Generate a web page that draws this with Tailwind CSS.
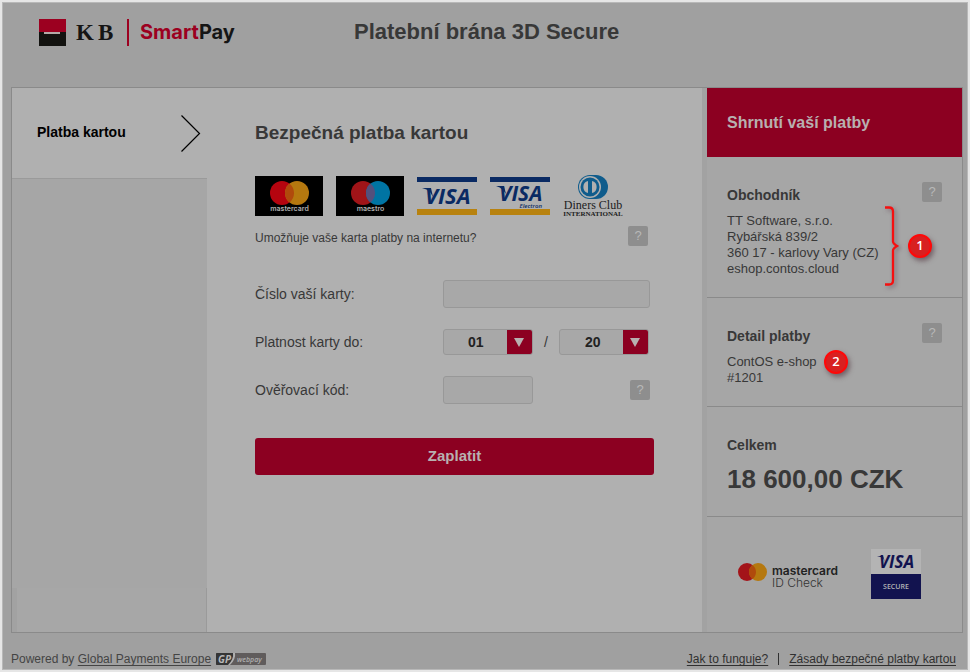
<!DOCTYPE html>
<html lang="cs">
<head>
    <meta charset="UTF-8">
    <meta name="viewport" content="width=device-width, initial-scale=1.0">
    <title>Platební brána 3D Secure</title>
    <script src="https://cdn.jsdelivr.net/npm/@tailwindcss/browser@4"></script>
</head>
<body class="bg-[#a0a0a0] font-['Liberation_Sans',Arial,sans-serif] text-[#383838]">
    <div class="flex min-h-screen flex-col border-2 border-[#e6e6e6]">
        <div class="flex flex-1 flex-col border border-[#b8b8b8] pr-1 pl-2">

            <header class="flex h-[84px] items-start">
                <svg class="mt-4 ml-[27px] h-7 w-[200px]" viewBox="0 0 200 28" role="img" aria-label="KB SmartPay">
                    <rect x="1" y="0" width="27" height="14" fill="#9c0020"/>
                    <rect x="1" y="13" width="27" height="14" fill="#12120f"/>
                    <rect x="6" y="13" width="16" height="2" fill="#b3a9a7"/>
                    <text x="38" y="21" font-family="Liberation Serif, serif" font-weight="bold" font-size="23" fill="#151515">K</text>
                    <text x="60" y="21" font-family="Liberation Serif, serif" font-weight="bold" font-size="23" fill="#151515">B</text>
                    <rect x="89" y="0" width="2" height="27" fill="#9c0020"/>
                    <text x="102" y="20" font-family="Inter" font-weight="bold" font-size="20" fill="#151515"><tspan fill="#9c0020">Smart</tspan>Pay</text>
                </svg>
                <h1 class="mt-[15px] ml-[116px] text-[22px] leading-7 font-bold">Platební brána 3D Secure</h1>
            </header>

            <div class="grid grid-cols-[195px_1fr_260px] border border-[#8a8a8a] bg-[#b0b0b0]">
                <nav class="flex flex-col bg-[#a6a6a6]">
                    <a href="#" class="flex h-[91px] items-center justify-between border-b border-[#9a9a9a] bg-[#b0b0b0] pr-[6px] pb-px pl-[25px] text-[14px] font-bold text-black">
                        Platba kartou
                        <svg class="h-10 w-5" viewBox="0 0 20 40" fill="none" stroke="#000" stroke-width="1.2"><path d="M0.500 2.500L18.500 20.500L0.500 38.500"/></svg>
                    </a>
                    <div class="mt-auto h-11 border-r border-l-[5px] border-r-[#9a9a9a] border-l-[#a2a2a2] bg-[#a7a7a7]"></div>
                </nav>

                <main class="px-12 pt-8">
                    <h2 class="text-[19px] leading-[26px] font-bold">Bezpečná platba kartou</h2>

                    <div class="mt-[30px] flex items-center gap-[13px]">
                        <svg class="h-10 w-[68px]" viewBox="0 0 68 40" role="img" aria-label="mastercard">
                            <rect width="68" height="40" fill="#000"/>
                            <circle cx="27" cy="17" r="12" fill="#b5040f"/>
                            <circle cx="42" cy="17" r="12" fill="#b5780f"/>
                            <path d="M34.500 7.600a12 12 0 0 1 0 18.800a12 12 0 0 1 0-18.800z" fill="#b04a0c"/>
                            <text x="34.500" y="35" text-anchor="middle" font-family="Inter" font-weight="600" font-size="7" fill="#b0b0b0">mastercard</text>
                        </svg>
                        <svg class="h-10 w-[68px]" viewBox="0 0 68 40" role="img" aria-label="maestro">
                            <rect width="68" height="40" fill="#000"/>
                            <circle cx="27" cy="17" r="12" fill="#a01418"/>
                            <circle cx="42" cy="17" r="12" fill="#0074a3"/>
                            <path d="M34.500 7.600a12 12 0 0 1 0 18.800a12 12 0 0 1 0-18.800z" fill="#54507c"/>
                            <text x="34.500" y="35" text-anchor="middle" font-family="Inter" font-weight="600" font-size="7" fill="#b0b0b0">maestro</text>
                        </svg>
                        <svg class="h-[38px] w-[60px]" viewBox="0 0 60 38" role="img" aria-label="VISA">
                            <rect width="60" height="5" fill="#0a2a63"/>
                            <rect y="32" width="60" height="6" fill="#b8820f"/>
                            <path d="M5 11h9l2 9-3-5q-3-3-8-4z" fill="#0a2a63"/>
                            <text x="8" y="27" font-family="Open Sans" font-weight="bold" font-style="italic" font-size="22" fill="#0a2a63">VISA</text>
                        </svg>
                        <svg class="h-[38px] w-[60px]" viewBox="0 0 60 38" role="img" aria-label="VISA Electron">
                            <rect width="60" height="5" fill="#0a2a63"/>
                            <rect y="32" width="60" height="6" fill="#b8820f"/>
                            <path d="M6 9h8l2 8-3-4q-3-3-7-4z" fill="#0a2a63"/>
                            <text x="9" y="24" font-family="Open Sans" font-weight="bold" font-style="italic" font-size="21" fill="#0a2a63">VISA</text>
                            <text x="52" y="31" text-anchor="end" font-family="Open Sans" font-weight="600" font-style="italic" font-size="6" fill="#0a2a63">Electron</text>
                        </svg>
                        <svg class="-my-px h-[42px] w-[60px]" viewBox="0 0 60 42" role="img" aria-label="Diners Club International">
                            <path d="M27 0h6a12 12 0 0 1 0 24h-6a12 12 0 0 1 0-24z" fill="#0f5c8c"/>
                            <circle cx="27" cy="12" r="11" fill="#b0b0b0"/>
                            <circle cx="27" cy="12" r="9.500" fill="#0f5c8c"/>
                            <path d="M25 6v12a6.200 6.200 0 0 1 0-12zM29 6v12a6.200 6.200 0 0 0 0-12z" fill="#b0b0b0"/>
                            <text x="30" y="34" text-anchor="middle" font-family="Liberation Serif" font-size="12" fill="#1c1c1c">Diners Club</text>
                            <text x="30" y="41" text-anchor="middle" font-family="Liberation Serif" font-weight="bold" font-size="7" fill="#1c1c1c">INTERNATIONAL</text>
                        </svg>
                    </div>

                    <div class="mt-[10px] flex items-center justify-between pr-[6px]">
                        <p class="mt-1 text-[12px] leading-4">Umožňuje vaše karta platby na internetu?</p>
                        <button type="button" class="size-5 rounded-xs bg-[#8e8e8e] text-[13px] leading-5 text-[#b8b8b8]">?</button>
                    </div>

                    <form class="mt-[34px]">
                        <div class="grid grid-cols-[188px_1fr] items-center gap-y-5 pr-1 text-[14px] leading-5">
                            <label for="card">Číslo vaší karty:</label>
                            <input id="card" type="text" class="h-7 w-full rounded-[3px] border border-[#989898] bg-[#a8a8a8] px-2">

                            <label for="month">Platnost karty do:</label>
                            <div class="flex h-7 items-center">
                                <div class="relative">
                                    <select id="month" class="block h-[26px] w-[90px] appearance-none rounded-[3px] border border-[#989898] bg-[#a8a8a8] pl-6 text-[14px] font-bold text-[#222]">
                                        <option>01</option>
                                    </select>
                                    <span class="pointer-events-none absolute inset-y-px right-px flex w-[25px] items-center justify-center rounded-r-[2px] bg-[#8c0021]">
                                        <svg class="h-[10px] w-3" viewBox="0 0 12 10" fill="#b8b0b0"><path d="M0 1h10L5 10z"/></svg>
                                    </span>
                                </div>
                                <span class="w-[26px] text-center">/</span>
                                <div class="relative">
                                    <select id="year" aria-label="Rok" class="block h-[26px] w-[90px] appearance-none rounded-[3px] border border-[#989898] bg-[#a8a8a8] pl-[25px] text-[14px] font-bold text-[#222]">
                                        <option>20</option>
                                    </select>
                                    <span class="pointer-events-none absolute inset-y-px right-px flex w-[25px] items-center justify-center rounded-r-[2px] bg-[#8c0021]">
                                        <svg class="h-[10px] w-3" viewBox="0 0 12 10" fill="#b8b0b0"><path d="M0 1h10L5 10z"/></svg>
                                    </span>
                                </div>
                            </div>

                            <label for="code">Ověřovací kód:</label>
                            <div class="flex items-center justify-between">
                                <input id="code" type="text" class="h-7 w-[90px] rounded-[3px] border border-[#989898] bg-[#a8a8a8] px-2">
                                <button type="button" class="size-5 rounded-xs bg-[#8e8e8e] text-[13px] leading-5 text-[#b8b8b8]">?</button>
                            </div>
                        </div>
                        <button type="submit" class="mt-[34px] h-[37px] w-full rounded-[3px] bg-[#8c0021] text-[15px] font-bold text-[#b8b0b0]">Zaplatit</button>
                    </form>
                </main>

                <aside class="border-l-[5px] border-[#a2a2a2] bg-[#a6a6a6]">
                    <h2 class="flex h-[69px] items-center bg-[#8c0021] px-5 text-[16px] font-bold text-[#b8b0b0]">Shrnutí vaší platby</h2>

                    <section class="relative border-b border-[#8a8a8a] px-5 pt-7 pb-5">
                        <div class="flex items-start justify-between">
                            <h3 class="text-[14px] leading-5 font-bold">Obchodník</h3>
                            <button type="button" class="-mt-[3px] mb-[3px] size-5 rounded-xs bg-[#8e8e8e] text-[13px] leading-5 text-[#b8b8b8]">?</button>
                        </div>
                        <p class="mt-2 text-[13px] leading-4">TT Software, s.r.o.<br>Rybářská 839/2<br>360 17 - karlovy Vary (CZ)<br>eshop.contos.cloud</p>
                        <svg class="absolute top-[49px] left-[178px] h-20 w-4 drop-shadow-[2px_2px_2px_rgba(90,50,70,0.5)]" viewBox="0 0 16 80" fill="none" stroke="#f51010" stroke-width="2.300"><path d="M0 1.500h4q4 0 4 4v30q0 2 4 4.500q-4 2.500-4 4.500v30q0 4-4 4h-4"/></svg>
                        <span class="absolute top-[77px] left-[201px] flex size-6 items-center justify-center rounded-full border-2 border-[#ff0808] bg-[#d82020] font-['Open_Sans',sans-serif] text-[13px] font-semibold text-white shadow-[2px_3px_5px_rgba(80,50,60,0.6)]">1</span>
                    </section>

                    <section class="relative border-b border-[#8a8a8a] px-5 pt-7 pb-5">
                        <div class="flex items-start justify-between">
                            <h3 class="text-[14px] leading-5 font-bold">Detail platby</h3>
                            <button type="button" class="-mt-[3px] mb-[3px] size-5 rounded-xs bg-[#8e8e8e] text-[13px] leading-5 text-[#b8b8b8]">?</button>
                        </div>
                        <p class="mt-2 text-[13px] leading-4">ContOS e-shop<br>#1201</p>
                        <span class="absolute top-[52px] left-[117px] flex size-6 items-center justify-center rounded-full border-2 border-[#ff0808] bg-[#d82020] font-['Open_Sans',sans-serif] text-[13px] font-semibold text-white shadow-[2px_3px_5px_rgba(80,50,60,0.6)]">2</span>
                    </section>

                    <section class="border-b border-[#8a8a8a] px-5 pt-7 pb-[21px]">
                        <h3 class="text-[14px] leading-5 font-bold">Celkem</h3>
                        <p class="mt-2 text-[26px] leading-8 font-bold">18 600,00 CZK</p>
                    </section>

                    <div class="flex h-[115px] items-center justify-between pr-[41px] pb-px pl-[31px]">
                        <svg class="h-8 w-[104px]" viewBox="0 0 104 32" role="img" aria-label="mastercard ID Check">
                            <circle cx="9" cy="14" r="9" fill="#a31419"/>
                            <circle cx="20" cy="14" r="9" fill="#b5780f"/>
                            <path d="M14.500 6.900a9 9 0 0 1 0 14.200a9 9 0 0 1 0-14.200z" fill="#b04a0c"/>
                            <text x="34" y="17" font-family="Inter" font-weight="600" font-size="12" fill="#222">mastercard</text>
                            <text x="34" y="29" font-family="Inter" font-weight="300" font-size="12" fill="#333">ID Check</text>
                        </svg>
                        <svg class="size-[50px]" viewBox="0 0 50 50" role="img" aria-label="VISA SECURE">
                            <rect width="50" height="25" fill="#b4b4b4"/>
                            <rect y="25" width="50" height="25" fill="#12134f"/>
                            <path d="M6 7h6l2 6-2-4q-2-1-6-2z" fill="#12134f"/>
                            <text x="8" y="19" font-family="Open Sans" font-weight="bold" font-style="italic" font-size="17" fill="#12134f">VISA</text>
                            <text x="25" y="40" text-anchor="middle" font-family="Open Sans" font-weight="600" font-size="7" fill="#b4b4b4">SECURE</text>
                        </svg>
                    </div>
                </aside>
            </div>

            <footer class="flex items-center justify-between pt-[18px] pr-[7px] text-[12px] leading-4 text-[#444]">
                <div class="flex items-center">
                    <span>Powered by <a href="#" class="underline underline-offset-2">Global Payments Europe</a></span>
                    <svg class="ml-[5px] h-3 w-[50px]" viewBox="0 0 50 12" role="img" aria-label="GP webpay">
                        <rect width="50" height="12" rx="1" fill="#605c5c"/>
                        <path d="M0 1q0-1 1-1h18l-5 12h-13q-1 0-1-1z" fill="#353535"/>
                        <path d="M17 0h2q1 6-5 12h-2q6-6 5-12z" fill="#b0b0b0"/>
                        <text x="2" y="10" font-family="Open Sans" font-weight="bold" font-style="italic" font-size="10" fill="#b8b8b8">GP</text>
                        <text x="21" y="9" font-family="Open Sans" font-weight="600" font-style="italic" font-size="7" fill="#b0b0b0">webpay</text>
                    </svg>
                </div>
                <div class="flex items-center text-[#303030]">
                    <a href="#" class="underline underline-offset-2">Jak to funguje?</a>
                    <span class="mx-[10px] h-3 w-px bg-[#303030]"></span>
                    <a href="#" class="underline underline-offset-2">Zásady bezpečné platby kartou</a>
                </div>
            </footer>
        </div>
    </div>
</body>
</html>
